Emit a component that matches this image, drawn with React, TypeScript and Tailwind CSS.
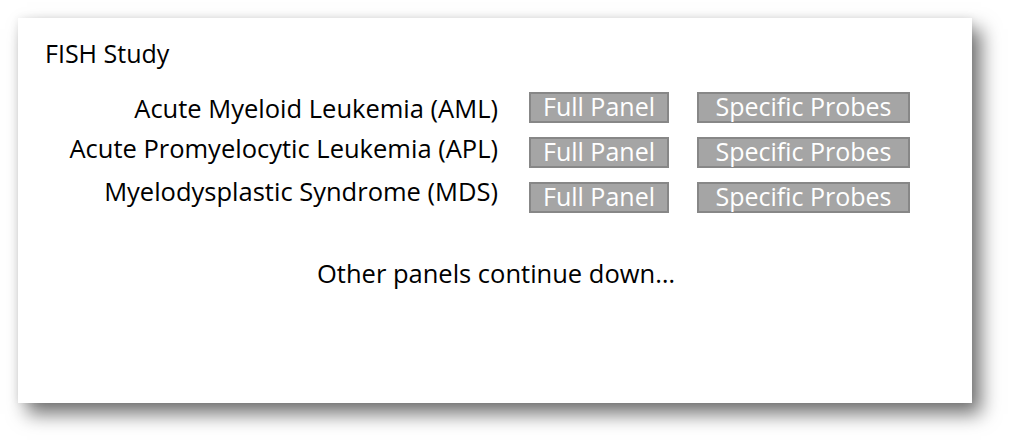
const panels = [
  { name: 'Acute Myeloid Leukemia (AML)', gap: 'mt-[1px]' },
  { name: 'Acute Promyelocytic Leukemia (APL)', gap: 'mt-[9px]' },
  { name: 'Myelodysplastic Syndrome (MDS)', gap: 'mt-[12px]' },
]

function PanelButton({ label, width }: { label: string; width: string }) {
  return (
    <button
      type="button"
      className={`${width} h-[31px] bg-[#a5a5a5] border-2 border-[#878787] text-white text-[25px] leading-none pb-[3px] flex items-center justify-center`}
    >
      {label}
    </button>
  )
}

export default function App() {
  return (
    <div
      className="w-[1009px] h-[440px] bg-white pt-[18px] pl-[18px]"
      style={{ fontFamily: '"Open Sans", "Noto Sans", sans-serif' }}
    >
      <div className="w-[954px] h-[385px] bg-white shadow-[9px_11px_18px_rgba(0,0,0,0.55),0_0_8px_rgba(0,0,0,0.08)] pt-[20px] pl-[27px] text-black">
        <h1 className="text-[25px] leading-[30px]">FISH Study</h1>

        <div className="mt-[24px] flex items-start">
          {/* disease names, right aligned against the buttons */}
          <div className="w-[453px] flex flex-col text-right text-[25.5px] leading-[31px]">
            {panels.map((p) => (
              <div key={p.name} className={p.gap}>
                {p.name}
              </div>
            ))}
          </div>

          <div className="ml-[31px] flex flex-col gap-[14px]">
            {panels.map((p) => (
              <div key={p.name} className="flex gap-[28px]">
                <PanelButton label="Full Panel" width="w-[140px]" />
                <PanelButton label="Specific Probes" width="w-[213px]" />
              </div>
            ))}
          </div>
        </div>

        <p className="mt-[45px] pl-[272px] text-[25.5px] leading-[31px]">Other panels continue down…</p>
      </div>
    </div>
  )
}
